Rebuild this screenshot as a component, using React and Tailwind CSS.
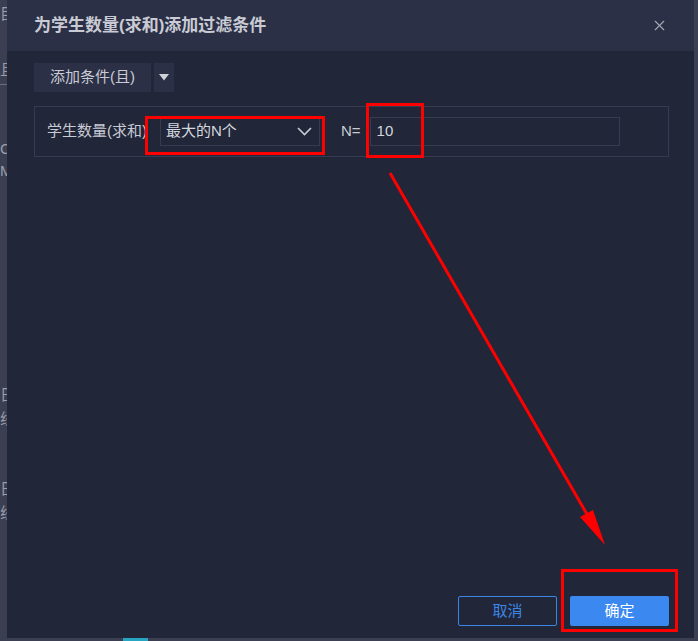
import { X } from 'lucide-react';

const FONT = { fontFamily: '"Liberation Sans", "Noto Sans CJK SC", sans-serif' };

// characters of the page behind the dialog, mostly hidden
const BEHIND = [
  ['目', 'mt-[4px]'],
  ['且', 'mt-[36px]'],
  ['C', 'mt-[54px]'],
  ['M', 'mt-[2px]'],
  ['日', 'mt-[204px]'],
  ['线', 'mt-[4px]'],
  ['日', 'mt-[50px]'],
  ['线', 'mt-[4px]'],
];

function Annotations() {
  return (
    <svg className="pointer-events-none absolute inset-0" width="698" height="641">
      <rect x="146.5" y="117.5" width="177" height="36" fill="none" stroke="#ff0000" strokeWidth="3" />
      <rect x="367.5" y="104.5" width="55" height="52" fill="none" stroke="#ff0000" strokeWidth="3" />
      <rect x="562.5" y="570.5" width="114" height="60" fill="none" stroke="#ff0000" strokeWidth="3" />
      <line x1="390" y1="173" x2="588" y2="516" stroke="#ff0000" strokeWidth="3" />
      <polygon points="580,517 593,510 605,545" fill="#ff0000" />
    </svg>
  );
}

export default function App() {
  return (
    <div className="relative flex h-[641px] w-[698px] flex-col overflow-hidden bg-[#3c3f52]" style={FONT}>
      <div className="flex h-[638px]">
        <div className="flex w-[7px] flex-col overflow-hidden whitespace-nowrap text-[15px] leading-[20px] text-[#9a9dab]">
          {BEHIND.map(([ch, mt], i) => (
            <span key={i} className={i === 1 ? `${mt} border-b border-[#6a6d7c] pb-[4px]` : mt}>{ch}</span>
          ))}
        </div>

        <div className="flex w-[688px] flex-col border-r border-[#3a3f55] bg-[#212639]">
          <div className="flex h-[51px] items-center justify-between bg-[#2b3046] pl-[27px] pr-[26px]">
            <h2 className="text-[17px] font-bold text-[#c9cbd4]">为学生数量(求和)添加过滤条件</h2>
            <X size={17} strokeWidth={1.6} className="text-[#a6a9b6]" />
          </div>

          <div className="flex flex-1 flex-col pl-[27px] pr-[25px] pt-[12px]">
            <div className="flex gap-[3px]">
              <button className="h-[29px] w-[117px] bg-[#2b3046] text-[15px] text-[#c9cbd4]">添加条件(且)</button>
              <button className="flex h-[29px] w-[20px] items-center justify-center bg-[#2b3046]">
                <svg width="10" height="7" viewBox="0 0 10 7"><path d="M0 0h10L5 6.5z" fill="#d0d2da" /></svg>
              </button>
            </div>

            <div className="mt-[14px] flex h-[51px] items-center border border-[#363b51] pl-[12px]">
              <span className="w-[100px] overflow-hidden whitespace-nowrap text-[15px] text-[#c9cbd4]">学生数量(求和)</span>
              <div className="ml-[13px] flex h-[29px] w-[160px] items-center justify-between border border-[#363b51] pl-[5px] pr-[7px] text-[15px] text-[#d4d6de]">
                <span>最大的N个</span>
                <svg width="15" height="9" viewBox="0 0 15 9"><path d="M1 1l6.5 6.5L14 1" fill="none" stroke="#c9cbd4" strokeWidth="1.6" /></svg>
              </div>
              <span className="ml-[21px] text-[15px] text-[#c9cbd4]">N=</span>
              <div className="ml-[9px] flex h-[29px] w-[250px] items-center border border-[#363b51] pl-[6px] text-[15px] text-[#d4d6de]">10</div>
            </div>

            <div className="mt-auto mb-[12px] flex justify-end gap-[13px]">
              <button className="h-[30px] w-[99px] rounded-[2px] border border-[#3e86e6] text-[15px] text-[#3e86e6]">取消</button>
              <button className="h-[30px] w-[99px] rounded-[2px] bg-[#3a88f0] text-[15px] text-white">确定</button>
            </div>
          </div>
        </div>
      </div>

      <div className="flex h-[3px] items-start">
        <span className="ml-[123px] h-[3px] w-[25px] bg-[#27a6c4]" />
      </div>

      <Annotations />
    </div>
  );
}
